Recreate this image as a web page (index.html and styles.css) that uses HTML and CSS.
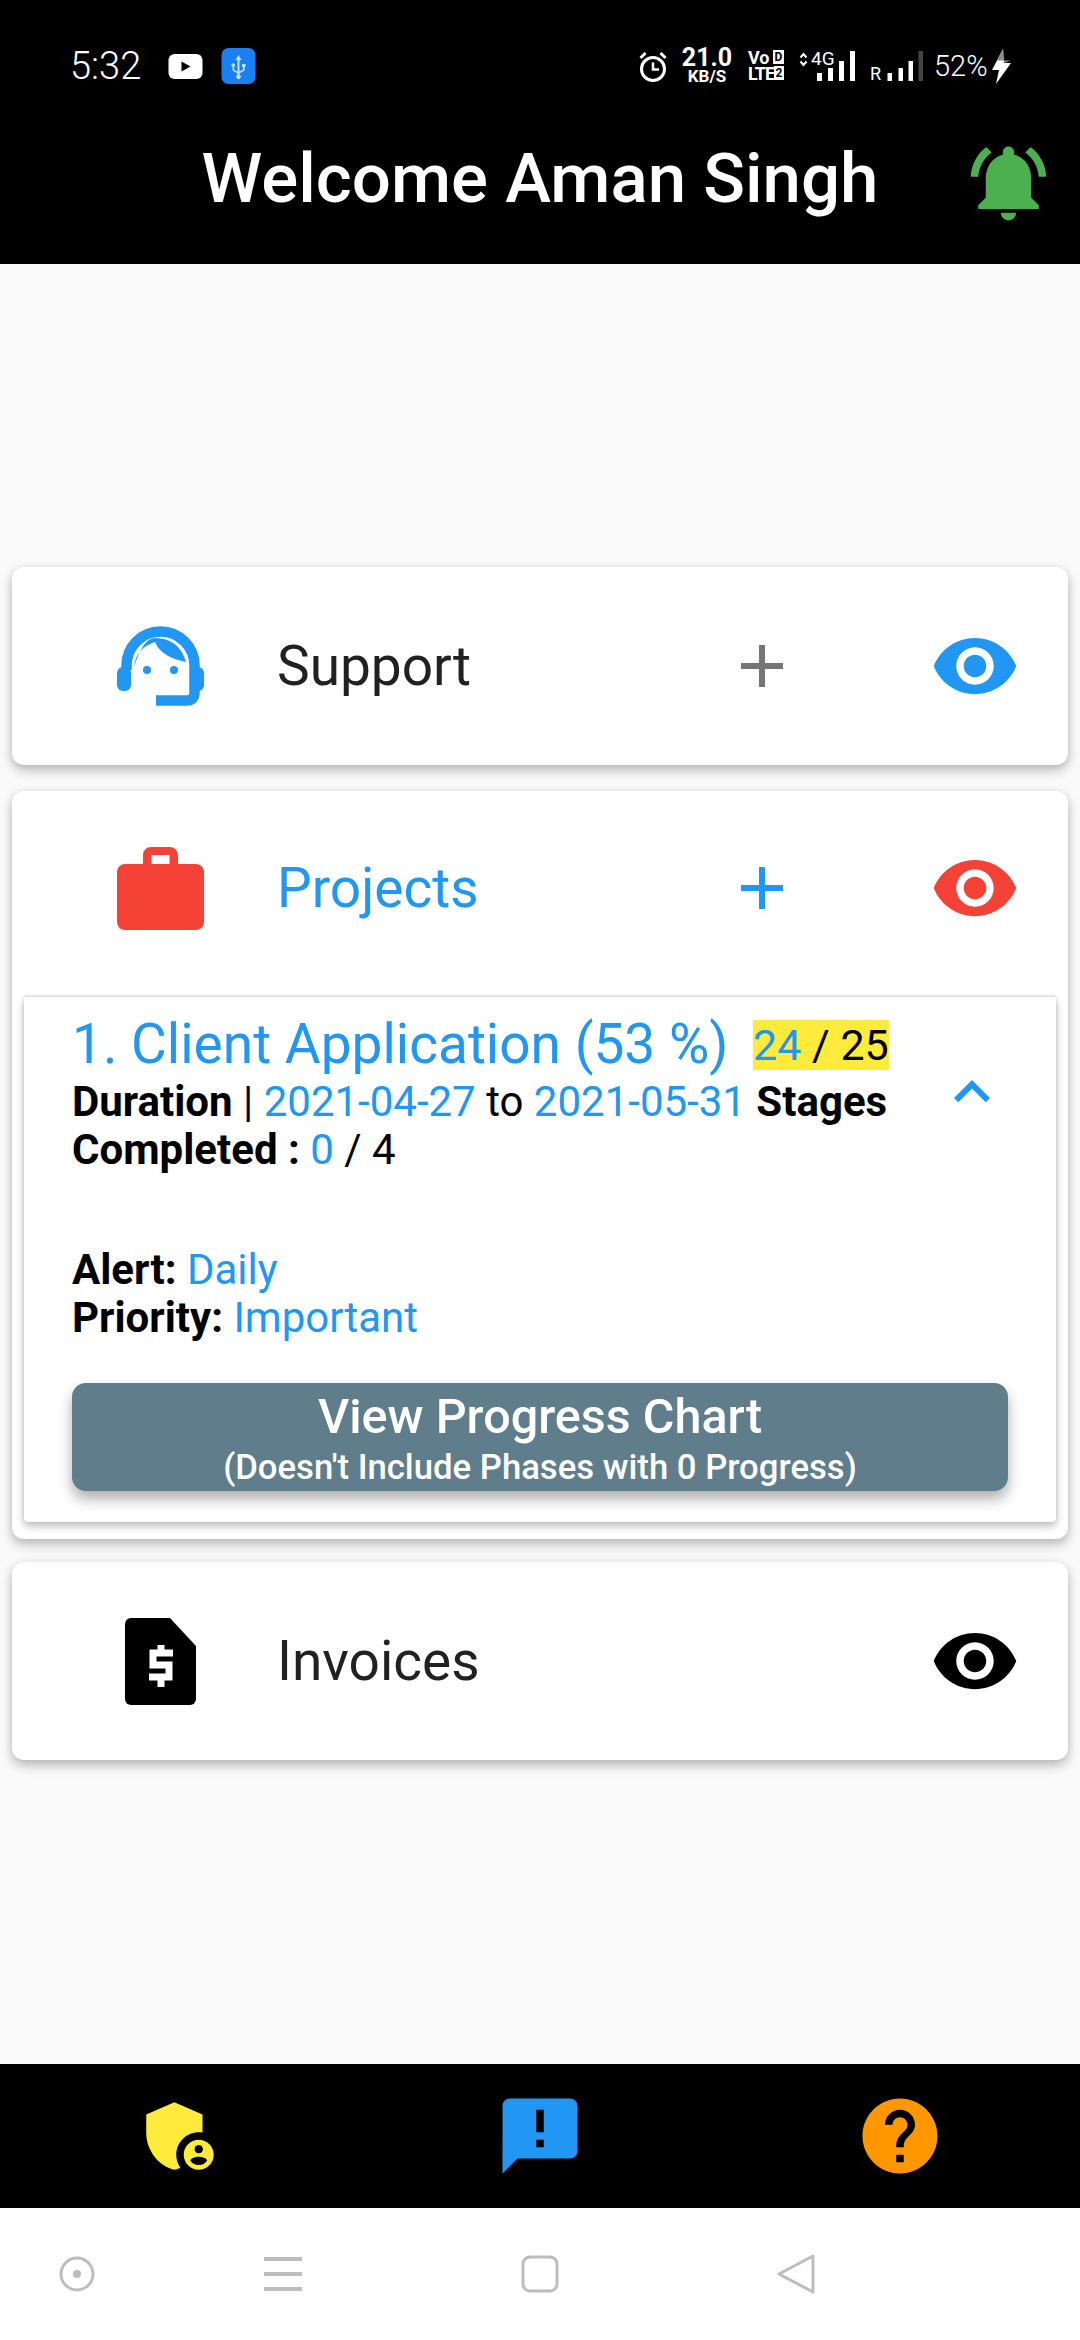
FILE: index.html
```html
<!DOCTYPE html>
<html lang="en">
  <head>
    <meta charset="UTF-8" />
    <meta name="viewport" content="width=device-width, initial-scale=1.0" />
    <title>Welcome Aman Singh</title>
    <link rel="stylesheet" href="styles.css">
  </head>
  <body>
    <header class="app-header">
      <div class="status-bar">
        <div class="status-left">
          <span class="time">5:32</span>
          <svg class="yt-icon" viewBox="0 0 34 25"><rect width="34" height="25" rx="6" fill="#fff" /><path d="M13 7.500l9 5-9 5z" fill="#000" /></svg>
          <svg class="usb-icon" viewBox="0 0 34 36"><rect width="34" height="36" rx="7" fill="#1a7ff0" /><path d="M17 7l3 5h-2v11.500l3.500-2v-2.500h-1v-3h3.500v3h-.9v3.500l-5.100 3v1.300a2.200 2.200 0 1 1-2 0v-1.300l-5-3v-3.700a1.800 1.800 0 1 1 1.600 0v2.800l3.400 2v-11.600h-2z" fill="#bfe3ff" /></svg>
        </div>
        <div class="status-right">
          <svg class="alarm-icon" viewBox="0 0 27 31"><circle cx="13.500" cy="18" r="11.500" fill="none" stroke="#fff" stroke-width="3" /><path d="M13.500 11.500v7h6" fill="none" stroke="#fff" stroke-width="2.500" /><path d="M1 7l5-5M26 7l-5-5" stroke="#fff" stroke-width="3" /></svg>
          <div class="speed"><span class="speed-num">21.0</span><span class="speed-unit">KB/S</span></div>
          <div class="volte">
            <div class="volte-row"><span>Vo</span><span class="volte-box">D</span></div>
            <div class="volte-row"><span class="volte-lte">LTE</span><span class="volte-box">2</span></div>
          </div>
          <svg class="arrows" viewBox="0 0 8 15"><path d="M1 5.500l3-3.500 3 3.500M1 9.500l3 3.500 3-3.500" fill="none" stroke="#fff" stroke-width="2" /></svg>
          <div class="signal-one">
            <span class="net">4G</span>
            <svg class="bars-one" viewBox="0 0 38 30"><rect y="22" width="5" height="8" fill="#fff" /><rect x="11" y="17" width="5" height="13" fill="#fff" /><rect x="22" y="10" width="5" height="20" fill="#fff" /><rect x="33" width="5" height="30" fill="#fff" /></svg>
          </div>
          <span class="roam">R</span>
          <svg class="bars-two" viewBox="0 0 36 30"><rect y="22" width="4.500" height="8" fill="#fff" /><rect x="11" y="17" width="4.500" height="13" fill="#fff" /><rect x="21" y="10" width="4.500" height="20" fill="#fff" /><rect x="31" width="4.500" height="30" fill="#444" /></svg>
          <span class="battery">52%</span>
          <svg class="bolt" viewBox="0 0 19 35"><path d="M11 0L0 21h7l-3 14 15-21h-7z" fill="#fff" /><path d="M11 0L5 11.500h14l-7 2.500z" fill="#8a8a8a" /></svg>
        </div>
      </div>
      <div class="title-row">
        <h1 class="title">Welcome Aman Singh</h1>
        <svg class="bell" viewBox="0 0 24 24"><path d="M7.580 4.080L6.150 2.650C3.750 4.480 2.170 7.300 2.030 10.500h2c.15-2.650 1.510-4.970 3.550-6.420zm12.390 6.420h2c-.15-3.200-1.730-6.020-4.120-7.850l-1.420 1.430c2.020 1.450 3.390 3.770 3.540 6.420zM18 11c0-3.070-1.640-5.640-4.500-6.320V4c0-.83-.67-1.500-1.500-1.500s-1.500.67-1.500 1.500v.68C7.630 5.360 6 7.920 6 11v5l-2 2v1h16v-1l-2-2v-5zm-6 11c.14 0 .27-.01.4-.04.65-.14 1.180-.58 1.440-1.180.1-.24.15-.5.15-.78h-4c.01 1.100.9 2 2.010 2z" /></svg>
      </div>
    </header>

    <main class="content">
      <section class="card">
        <div class="card-row">
          <svg class="row-icon support-icon" viewBox="0 0 87 80">
            <path d="M9.500 44v-4.500a34 34 0 0 1 68 0v27q0 8-8 8H39" fill="none" stroke="#2196f3" stroke-width="10.500" />
            <rect y="41" width="14" height="24" rx="6" fill="#2196f3" />
            <rect x="73" y="41" width="14" height="24" rx="6" fill="#2196f3" />
            <path d="M17 41Q19 22 38 16Q44 31 69 36Q62 12 38 12Q26 12 17 41z" fill="#2196f3" />
            <circle cx="30" cy="44" r="4" fill="#2196f3" />
            <circle cx="57" cy="44" r="4" fill="#2196f3" />
          </svg>
          <span class="row-label">Support</span>
          <svg class="plus plus-gray" viewBox="0 0 24 24"><path d="M19 13h-6v6h-2v-6H5v-2h6V5h2v6h6v2z" /></svg>
          <svg class="eye eye-blue" viewBox="0 0 24 24"><path d="M12 4.500C7 4.500 2.730 7.610 1 12c1.730 4.390 6 7.500 11 7.500s9.270-3.110 11-7.500c-1.730-4.390-6-7.500-11-7.500zM12 17c-2.760 0-5-2.240-5-5s2.240-5 5-5 5 2.240 5 5-2.240 5-5 5zm0-8c-1.660 0-3 1.340-3 3s1.340 3 3 3 3-1.340 3-3-1.340-3-3-3z" /></svg>
        </div>
      </section>

      <section class="card card-open">
        <div class="card-row row-open">
          <svg class="row-icon case-icon" viewBox="0 0 87 83"><path d="M26 17V8a8 8 0 0 1 8-8h19a8 8 0 0 1 8 8v9h18a8 8 0 0 1 8 8v50a8 8 0 0 1-8 8H8a8 8 0 0 1-8-8V25a8 8 0 0 1 8-8zM34.500 17h18V8h-18z" fill="#f44336" fill-rule="evenodd" /></svg>
          <span class="row-label label-active">Projects</span>
          <svg class="plus plus-blue" viewBox="0 0 24 24"><path d="M19 13h-6v6h-2v-6H5v-2h6V5h2v6h6v2z" /></svg>
          <svg class="eye eye-red" viewBox="0 0 24 24"><path d="M12 4.500C7 4.500 2.730 7.610 1 12c1.730 4.390 6 7.500 11 7.500s9.270-3.110 11-7.500c-1.730-4.390-6-7.500-11-7.500zM12 17c-2.760 0-5-2.240-5-5s2.240-5 5-5 5 2.240 5 5-2.240 5-5 5zm0-8c-1.660 0-3 1.340-3 3s1.340 3 3 3 3-1.340 3-3-1.340-3-3-3z" /></svg>
        </div>

        <div class="project">
          <div class="project-head">
            <div class="project-info">
              <div class="project-title">1. Client Application (53 %) <span class="count"><span class="blue">24</span> / 25</span></div>
              <p class="line"><b>Duration</b> | <span class="blue">2021-04-27</span> to <span class="blue">2021-05-31</span> <b>Stages Completed :</b> <span class="blue">0</span> / 4</p>
              <p class="line line-alert"><b>Alert:</b> <span class="blue">Daily</span></p>
              <p class="line"><b>Priority:</b> <span class="blue">Important</span></p>
            </div>
            <svg class="chevron" viewBox="0 0 24 24"><path d="M12 8l-6 6 1.410 1.410L12 10.830l4.590 4.580L18 14z" /></svg>
          </div>
          <button class="chart-btn">
            <span class="chart-main">View Progress Chart</span>
            <span class="chart-sub">(Doesn't Include Phases with 0 Progress)</span>
          </button>
        </div>
      </section>

      <section class="card">
        <div class="card-row">
          <svg class="row-icon invoice-icon" viewBox="0 0 71 87">
            <path d="M6 0H45L71 28V81a6 6 0 0 1-6 6H6a6 6 0 0 1-6-6V6a6 6 0 0 1 6-6z" />
            <path d="M48 35H28V47H44V59H24M36 27V35M36 59V69" fill="none" stroke="#fff" stroke-width="7" />
          </svg>
          <span class="row-label">Invoices</span>
          <svg class="eye" viewBox="0 0 24 24"><path d="M12 4.500C7 4.500 2.730 7.610 1 12c1.730 4.390 6 7.500 11 7.500s9.270-3.110 11-7.500c-1.730-4.390-6-7.500-11-7.500zM12 17c-2.760 0-5-2.240-5-5s2.240-5 5-5 5 2.240 5 5-2.240 5-5 5zm0-8c-1.660 0-3 1.340-3 3s1.340 3 3 3 3-1.340 3-3-1.340-3-3-3z" /></svg>
        </div>
      </section>
    </main>

    <nav class="bottom-nav">
      <div class="nav-item"><svg class="nav-icon" fill="#ffeb3b" viewBox="0 0 24 24"><path d="M17 11c.34 0 .67.04 1 .09V6.270L10.500 3 3 6.270v4.910c0 4.540 3.200 8.790 7.500 9.820.55-.13 1.080-.32 1.600-.55-.69-.98-1.100-2.170-1.100-3.450 0-3.310 2.690-6 6-6z" /><path d="M17 13c-2.210 0-4 1.790-4 4s1.790 4 4 4 4-1.790 4-4-1.790-4-4-4zm0 1.380c.62 0 1.120.51 1.120 1.120s-.51 1.120-1.120 1.120-1.120-.51-1.120-1.120.5-1.120 1.120-1.120zm0 5.370c-.93 0-1.740-.46-2.240-1.170.05-.72 1.510-1.080 2.240-1.080s2.190.36 2.240 1.080c-.5.71-1.310 1.170-2.240 1.170z" /></svg></div>
      <div class="nav-item"><svg class="nav-icon" fill="#2196f3" viewBox="0 0 24 24"><path d="M20 2H4c-1.100 0-1.990.9-1.990 2L2 22l4-4h14c1.100 0 2-.9 2-2V4c0-1.100-.9-2-2-2zm-7 9h-2V5h2v6zm0 4h-2v-2h2v2z" /></svg></div>
      <div class="nav-item"><svg class="nav-icon" fill="#ff9800" viewBox="0 0 24 24"><path d="M12 2C6.480 2 2 6.480 2 12s4.480 10 10 10 10-4.480 10-10S17.520 2 12 2zm1 17h-2v-2h2v2zm2.070-7.750l-.9.920C13.450 12.900 13 13.500 13 15h-2v-.5c0-1.100.45-2.100 1.170-2.830l1.240-1.260c.37-.36.59-.86.59-1.410 0-1.100-.9-2-2-2s-2 .9-2 2H8c0-2.210 1.790-4 4-4s4 1.790 4 4c0 .88-.36 1.680-.93 2.250z" /></svg></div>
    </nav>

    <div class="system-nav">
      <svg class="sys-icon" viewBox="0 0 40 40"><circle cx="20" cy="20" r="16" fill="none" stroke="#bdbdbd" stroke-width="3" /><circle cx="20" cy="20" r="4" fill="#bdbdbd" /></svg>
      <svg class="sys-icon sys-menu" viewBox="0 0 40 40"><path d="M1 5h38M1 20h38M1 35h38" stroke="#bdbdbd" stroke-width="4" /></svg>
      <svg class="sys-icon sys-square" viewBox="0 0 40 40"><rect x="3" y="3" width="34" height="34" rx="7" fill="none" stroke="#bdbdbd" stroke-width="3" /></svg>
      <svg class="sys-icon sys-back" viewBox="0 0 40 40"><path d="M37 2L3 20l34 18z" fill="none" stroke="#bdbdbd" stroke-width="3" stroke-linejoin="round" /></svg>
    </div>
  </body>
</html>
```

FILE: styles.css
```css
:root {
  --blue: #2196f3;
  --red: #f44336;
  --yellow: #ffeb3b;
  --green: #4caf50;
  --slate: #607d8b;
  --ink: #212121;
}

* {
  margin: 0;
  padding: 0;
  box-sizing: border-box;
}

body {
  width: 1080px;
  height: 2340px;
  overflow: hidden;
  display: flex;
  flex-direction: column;
  background: #fafafa;
  font-family: Roboto, "Noto Sans", sans-serif;
  color: #000;
}

/* header + status bar */
.app-header {
  height: 264px;
  flex-shrink: 0;
  padding-top: 48px;
  background: #000;
  color: #fff;
}

.status-bar {
  height: 36px;
  display: flex;
  justify-content: space-between;
  align-items: center;
  padding: 0 69px 0 70px;
}

.status-left,
.status-right {
  display: flex;
  align-items: center;
}

.time {
  font-size: 38px;
  font-weight: 300;
  line-height: 36px;
  width: 98px;
}

.yt-icon {
  width: 35px;
  height: 25px;
  margin-right: 18px;
}

.usb-icon {
  width: 35px;
  height: 36px;
}

.alarm-icon {
  width: 28px;
  height: 31px;
  margin-right: 16px;
}

.speed {
  display: flex;
  flex-direction: column;
  align-items: center;
  width: 48px;
  margin-right: 17px;
  font-weight: 700;
}

.speed-num {
  font-size: 25px;
  line-height: 20px;
}

.speed-unit {
  font-size: 17px;
  line-height: 16px;
}

.volte {
  width: 36px;
  margin-right: 15px;
  font-size: 18px;
  font-weight: 700;
  line-height: 16px;
}

.volte-row {
  display: flex;
  justify-content: space-between;
}

.volte-lte {
  letter-spacing: -1px;
}

.volte-box {
  width: 11px;
  height: 14px;
  background: #fff;
  color: #000;
  font-size: 12px;
  line-height: 14px;
  text-align: center;
}

.arrows {
  width: 9px;
  height: 15px;
  margin: -14px 3px 0 0;
}

.signal-one {
  position: relative;
  width: 44px;
  height: 30px;
  margin-right: 15px;
}

.net {
  position: absolute;
  top: -1px;
  left: 0;
  font-size: 19px;
  line-height: 18px;
}

.bars-one {
  position: absolute;
  left: 6px;
  top: 0;
  width: 38px;
  height: 30px;
}

.roam {
  width: 9px;
  font-size: 18px;
  align-self: flex-end;
  line-height: 20px;
  margin-right: 8px;
}

.bars-two {
  width: 37px;
  height: 30px;
  margin-right: 10px;
}

.battery {
  width: 51px;
  font-size: 29px;
  font-weight: 300;
  margin-right: 7px;
  white-space: nowrap;
}

.bolt {
  width: 19px;
  height: 35px;
}

.title-row {
  display: grid;
  grid-template-columns: 1fr auto 1fr;
  grid-template-rows: 80px;
  align-items: center;
  margin-top: 55px;
}

.title {
  grid-column: 2;
  font-size: 69px;
  font-weight: 500;
  line-height: 80px;
  white-space: nowrap;
}

.bell {
  grid-column: 3;
  justify-self: end;
  width: 91px;
  height: 91px;
  margin: 6px 26px 0 0;
  fill: var(--green);
}

/* cards */
.content {
  flex: 1;
  padding: 303px 12px 0;
  display: flex;
  flex-direction: column;
  gap: 26px;
}

.card {
  background: #fff;
  border-radius: 12px;
  box-shadow: 0 6px 12px rgba(0, 0, 0, 0.22), 0 1px 8px rgba(0, 0, 0, 0.1);
}

.card-open {
  margin-bottom: -3px;
  padding-bottom: 17px;
}

.card-row {
  height: 198px;
  display: flex;
  align-items: center;
  padding: 0 48px 0 105px;
}

.row-open {
  height: 194px;
  margin-bottom: 12px;
}

.row-icon {
  width: 87px;
  flex-shrink: 0;
}

.support-icon {
  height: 80px;
}

.case-icon {
  height: 83px;
}

.invoice-icon {
  width: 71px;
  height: 87px;
  margin: 0 8px;
}

.row-label {
  flex: 1;
  margin-left: 73px;
  font-size: 55px;
  color: var(--ink);
}

.label-active {
  color: var(--blue);
}

.plus {
  width: 72px;
  height: 72px;
  margin-right: 132px;
}

.plus-gray {
  fill: #757575;
}

.plus-blue {
  fill: var(--blue);
}

.eye {
  width: 90px;
  height: 90px;
  fill: #000;
}

.eye-blue {
  fill: var(--blue);
}

.eye-red {
  fill: var(--red);
}

/* expanded project */
.project {
  margin: 0 12px;
  padding: 14px 48px 31px;
  background: #fff;
  border-radius: 0 0 4px 4px;
  box-shadow: 0 4px 8px rgba(0, 0, 0, 0.28), 0 -1px 3px rgba(0, 0, 0, 0.15);
}

.project-head {
  display: flex;
}

.project-info {
  width: 830px;
  flex-shrink: 0;
}

.project-title {
  font-size: 55px;
  line-height: 66px;
  color: var(--blue);
  white-space: nowrap;
}

.count {
  margin-left: 11px;
  font-size: 43px;
  background: var(--yellow);
  color: #000;
  vertical-align: 3px;
}

.blue {
  color: var(--blue);
}

.line {
  font-size: 42px;
  line-height: 48px;
}

.line b {
  font-weight: 700;
}

.line-alert {
  margin-top: 72px;
}

.chevron {
  width: 72px;
  height: 72px;
  margin: 45px 0 0 34px;
  flex-shrink: 0;
  fill: var(--blue);
}

.chart-btn {
  width: 100%;
  height: 108px;
  margin-top: 41px;
  padding-top: 8px;
  display: flex;
  flex-direction: column;
  align-items: center;
  border: none;
  border-radius: 14px;
  background: var(--slate);
  color: #fff;
  font-family: inherit;
  font-weight: 500;
  box-shadow: 0 8px 14px rgba(0, 0, 0, 0.32);
}

.chart-main {
  font-size: 48.5px;
  line-height: 52px;
}

.chart-sub {
  margin-top: 4px;
  font-size: 34.7px;
  line-height: 40px;
}

/* bottom bars */
.bottom-nav {
  height: 144px;
  flex-shrink: 0;
  display: flex;
  background: #000;
}

.nav-item {
  width: 361px;
  display: flex;
  justify-content: center;
  align-items: center;
}

.nav-icon {
  width: 90px;
  height: 90px;
}

.system-nav {
  height: 132px;
  flex-shrink: 0;
  display: flex;
  align-items: center;
  padding-left: 57px;
  background: #fff;
}

.sys-icon {
  width: 40px;
  height: 40px;
}

.sys-menu {
  margin-left: 166px;
}

.sys-square {
  margin-left: 217px;
}

.sys-back {
  margin-left: 216px;
}
```
